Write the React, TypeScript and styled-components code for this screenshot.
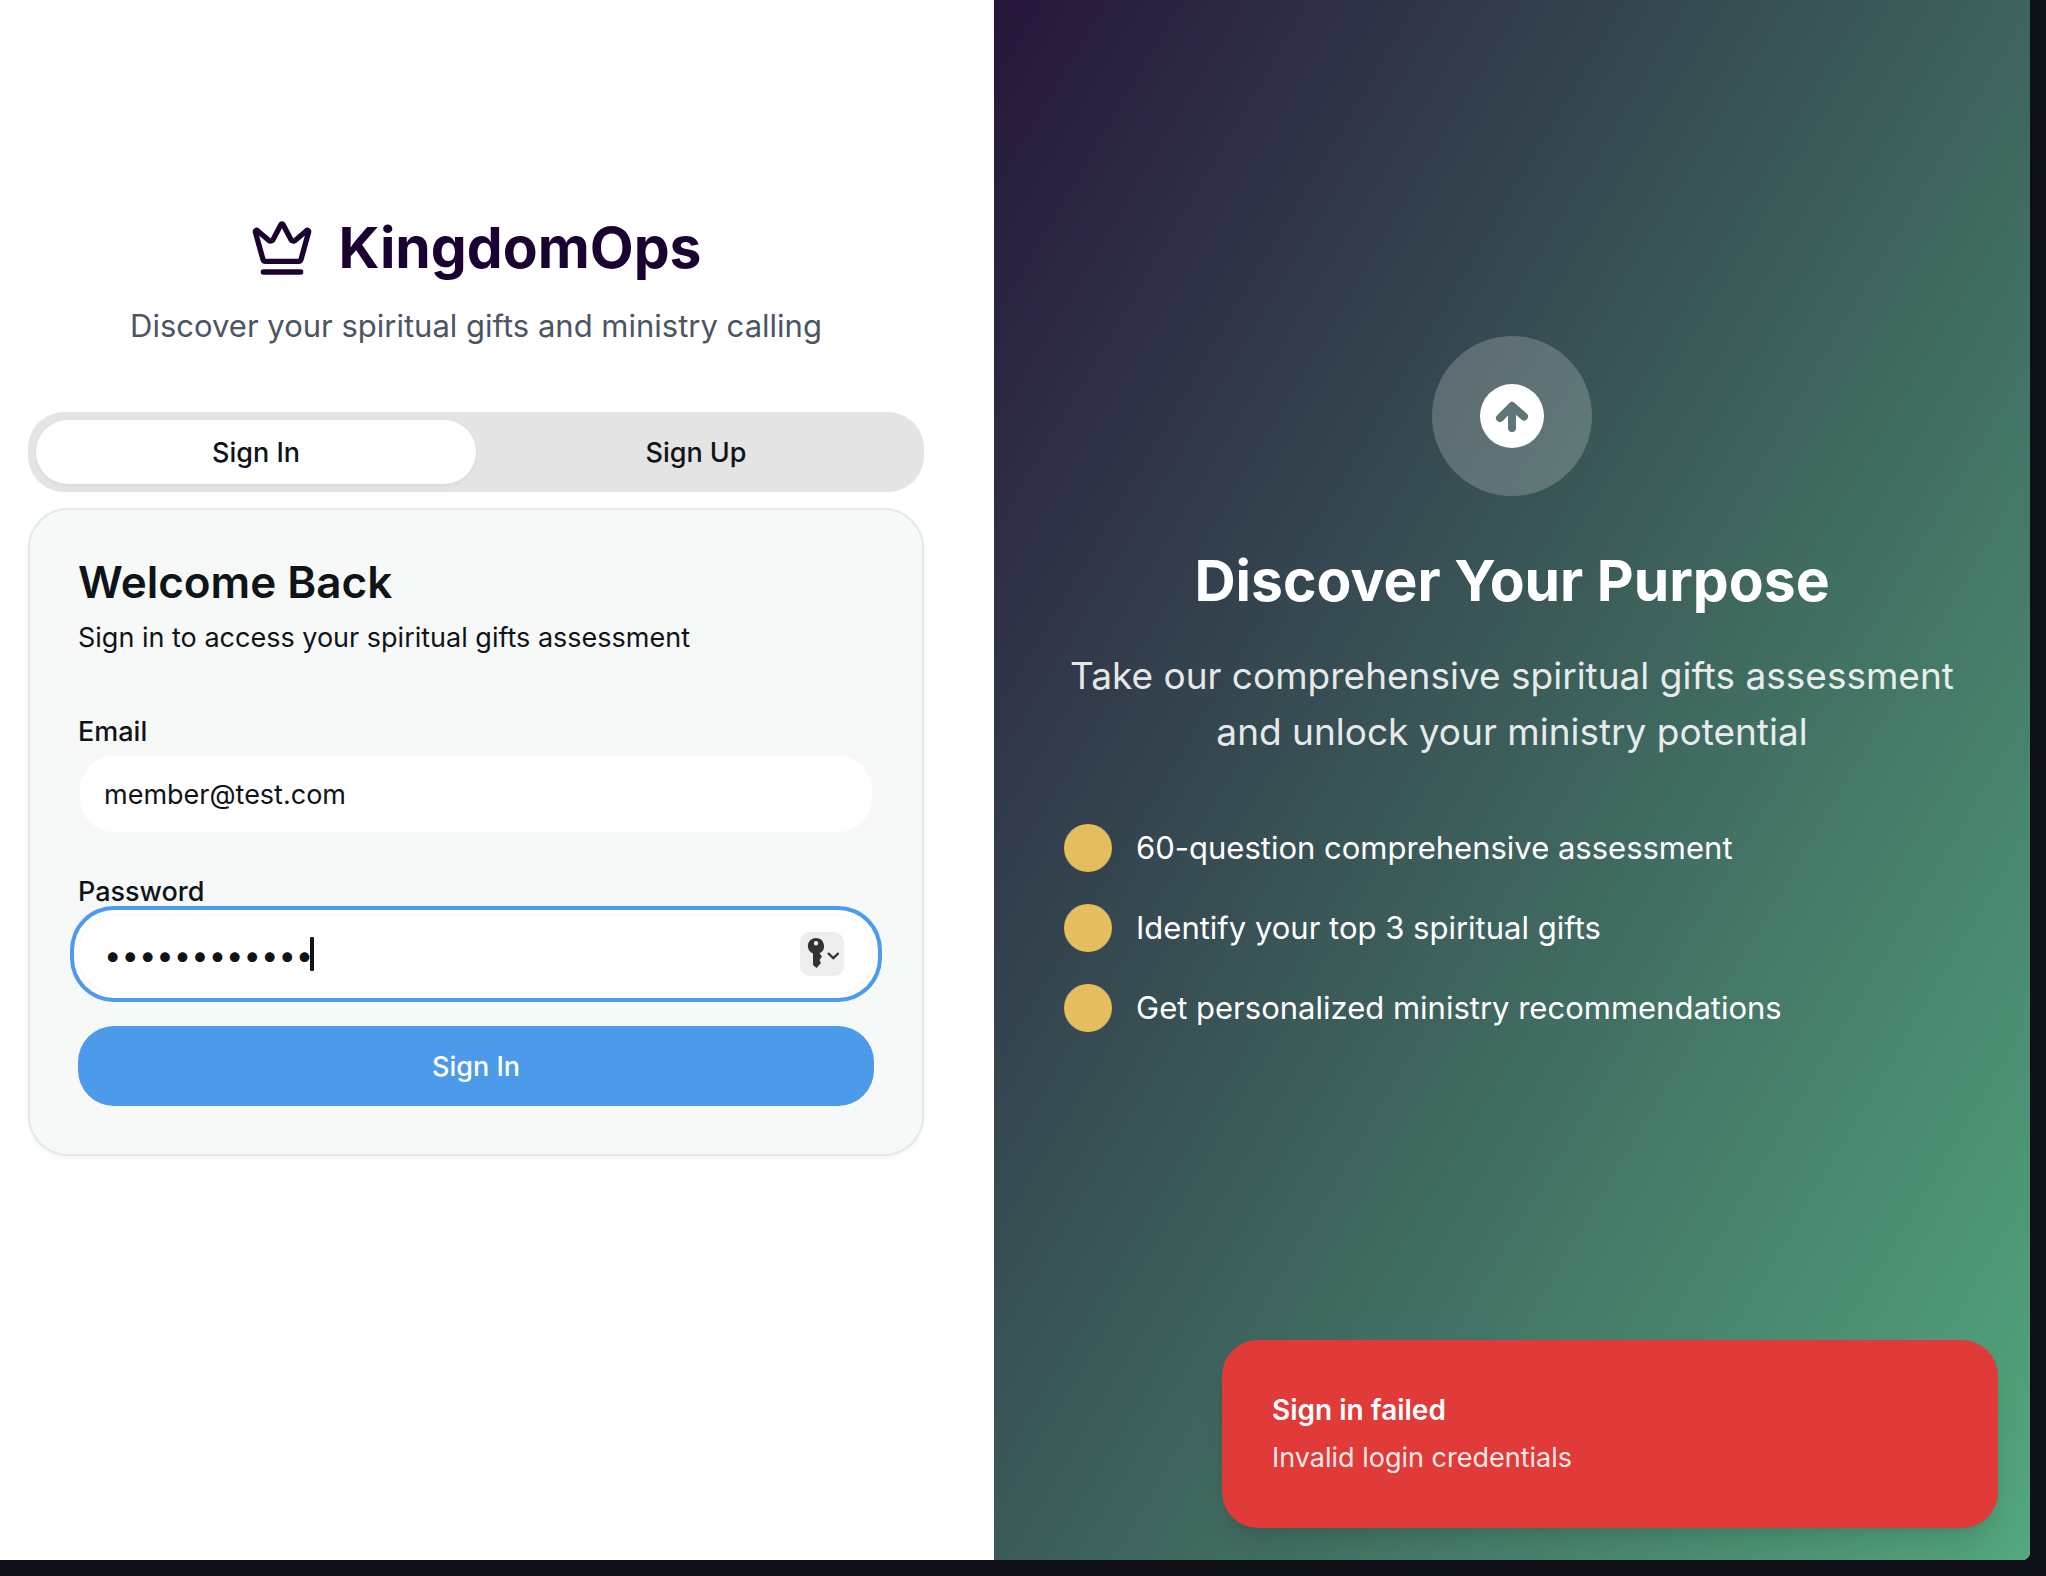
import { useState } from "react";
import styled, { createGlobalStyle } from "styled-components";

const GlobalStyle = createGlobalStyle`
  *, *::before, *::after { box-sizing: border-box; }
  html, body, #root { height: 100%; }
  body { margin: 0; background: #0f1015; }
  body, button, input { font-family: Inter, "Liberation Sans", sans-serif; }
  h1, h2, p, ul { margin: 0; padding: 0; }
`;

const Window = styled.div`
  height: 100%;
  padding: 0 16px 16px 0;
`;

const Page = styled.main`
  position: relative;
  display: grid;
  grid-template-columns: 994fr 1036fr;
  height: 100%;
  overflow: hidden;
  border-radius: 0 0 8px 0;
  background: #ffffff;
`;

const FormPanel = styled.section`
  display: flex;
  flex-direction: column;
  padding: 208px 70px 0 28px;
`;

const Brand = styled.header`
  display: flex;
  flex-direction: column;
  align-items: center;
  gap: 16px;
  margin-bottom: 64px;
`;

const BrandRow = styled.div`
  display: flex;
  align-items: center;
  gap: 24px;
  color: #1b0331;
`;

const BrandName = styled.h1`
  font-size: 57px;
  line-height: 80px;
  font-weight: 700;
`;

const Tagline = styled.p`
  font-size: 31px;
  line-height: 44px;
  color: #4b5563;
`;

const Tabs = styled.div`
  display: grid;
  grid-template-columns: 1fr 1fr;
  height: 80px;
  padding: 8px;
  margin-bottom: 16px;
  border-radius: 36px;
  background: #e4e4e4;
`;

const Tab = styled.button<{ $active: boolean }>`
  border: 0;
  border-radius: 32px;
  background: ${(p) => (p.$active ? "#ffffff" : "transparent")};
  box-shadow: ${(p) => (p.$active ? "0 2px 4px rgba(0, 0, 0, 0.05)" : "none")};
  font-size: 27px;
  font-weight: 500;
  color: #0f1419;
`;

const Card = styled.form`
  display: flex;
  flex-direction: column;
  padding: 48px;
  border: 2px solid #e1eaef;
  border-radius: 40px;
  background: #f7f9f8;
  box-shadow: 0 2px 4px rgba(0, 0, 0, 0.05);
  color: #0f1419;
`;

const CardTitle = styled.h2`
  font-size: 44px;
  line-height: 48px;
  font-weight: 600;
`;

const CardText = styled.p`
  margin: 12px 0 52px;
  font-size: 27px;
  line-height: 40px;
`;

const Fields = styled.div`
  display: grid;
  gap: 36px;
  margin-bottom: 32px;
`;

const Field = styled.div`
  display: flex;
  flex-direction: column;
`;

const Label = styled.label`
  font-size: 27px;
  line-height: 44px;
  font-weight: 500;
`;

const InputWrap = styled.div`
  position: relative;
  display: grid;
`;

const Input = styled.input<{ $ringed?: boolean }>`
  width: 100%;
  height: 80px;
  padding: 4px 24px;
  border: 2px solid ${(p) => (p.$ringed ? "#fafafa" : "#f7f9f8")};
  border-radius: 36px;
  background: #ffffff;
  box-shadow: ${(p) => (p.$ringed ? "0 0 0 4px #ffffff, 0 0 0 8px #4d9cec" : "none")};
  outline: none;
  font-size: ${(p) => (p.$ringed ? 31 : 27)}px;
  color: #0f1419;
`;

const Caret = styled.span`
  position: absolute;
  left: 232px;
  top: 23px;
  width: 4px;
  height: 34px;
  border-radius: 1px;
  background: #0f1419;
`;

const KeyButton = styled.button`
  position: absolute;
  right: 30px;
  top: 18px;
  width: 44px;
  height: 44px;
  padding: 0;
  border: 0;
  border-radius: 10px;
  background: #eeeeee;
`;

const Submit = styled.button`
  height: 80px;
  border: 0;
  border-radius: 36px;
  background: #4c9aea;
  font-size: 27px;
  font-weight: 500;
  color: #ffffff;
`;

const HeroPanel = styled.section`
  display: flex;
  flex-direction: column;
  align-items: center;
  padding: 336px 64px 0;
  background: linear-gradient(to bottom right, #240d36 0%, #3b5b59 50%, #53a77e 100%) bottom / 100% calc(100% + 192px) no-repeat;
  color: #ffffff;
`;

const HeroBadge = styled.div`
  display: grid;
  place-items: center;
  width: 160px;
  height: 160px;
  margin-bottom: 48px;
  border-radius: 50%;
  background: rgba(255, 255, 255, 0.2);
`;

const HeroTitle = styled.h2`
  font-size: 57px;
  line-height: 74px;
  font-weight: 700;
`;

const HeroText = styled.p`
  max-width: 896px;
  margin: 30px 0 64px;
  font-size: 37px;
  line-height: 56px;
  text-align: center;
  color: rgba(255, 255, 255, 0.9);
`;

const Features = styled.ul`
  display: grid;
  gap: 32px;
  width: 100%;
  max-width: 896px;
  list-style: none;
`;

const Feature = styled.li`
  display: flex;
  align-items: center;
  gap: 24px;
  font-size: 31px;
  line-height: 48px;
`;

const Dot = styled.span`
  width: 48px;
  height: 48px;
  border-radius: 50%;
  background: #e3bd5e;
`;

const Toast = styled.div`
  position: absolute;
  right: 32px;
  bottom: 32px;
  width: 776px;
  padding: 50px;
  border-radius: 36px;
  background: #e03b39;
  box-shadow: 0 20px 30px -6px rgba(0, 0, 0, 0.1), 0 8px 12px -8px rgba(0, 0, 0, 0.1);
  color: #ffffff;
`;

const ToastTitle = styled.p`
  margin-bottom: 8px;
  font-size: 28px;
  line-height: 40px;
  font-weight: 600;
`;

const ToastText = styled.p`
  font-size: 27px;
  line-height: 40px;
  color: rgba(255, 255, 255, 0.9);
`;

const CrownIcon = () => (
  <svg width="64" height="64" viewBox="0 0 24 24" fill="none" stroke="currentColor" strokeWidth="2" strokeLinecap="round" strokeLinejoin="round" aria-hidden="true">
    <path d="M11.562 3.266a.5.5 0 0 1 .876 0L15.39 8.87a1 1 0 0 0 1.516.294L21.183 5.5a.5.5 0 0 1 .798.519l-2.834 10.246a1 1 0 0 1-.956.734H5.81a1 1 0 0 1-.957-.734L2.02 6.02a.5.5 0 0 1 .798-.519l4.276 3.664a1 1 0 0 0 1.516-.294z" />
    <path d="M5 21h14" />
  </svg>
);

const ArrowIcon = () => (
  <svg width="64" height="64" viewBox="0 0 64 64" aria-hidden="true">
    <circle cx="32" cy="32" r="32" fill="#ffffff" />
    <path d="M20 34L32 22L44 32.500M32 24V44" fill="none" stroke="#5f7578" strokeWidth="8" strokeLinecap="round" strokeLinejoin="round" />
  </svg>
);

const KeyIcon = () => (
  <svg width="44" height="44" viewBox="0 0 44 44" aria-hidden="true">
    <path fillRule="evenodd" fill="#333333" d="M16 6a8 8 0 0 1 3.500 15.200L22 24.500l-2.500 3.500 1.500 3-4.500 5-3.500-3V21.500A8 8 0 0 1 16 6Zm0 3a2.200 2.200 0 1 0 0 4.400 2.200 2.200 0 0 0 0-4.400Z" />
    <path d="M28 21L33.300 26L38.600 21" fill="none" stroke="#333333" strokeWidth="2.400" />
  </svg>
);

const features = [
  "60-question comprehensive assessment",
  "Identify your top 3 spiritual gifts",
  "Get personalized ministry recommendations",
];

export default function App() {
  const [tab, setTab] = useState("in");
  return (
    <Window>
      <GlobalStyle />
      <Page>
        <FormPanel>
          <Brand>
            <BrandRow>
              <CrownIcon />
              <BrandName>KingdomOps</BrandName>
            </BrandRow>
            <Tagline>Discover your spiritual gifts and ministry calling</Tagline>
          </Brand>
          <Tabs role="tablist">
            <Tab role="tab" type="button" aria-selected={tab === "in"} $active={tab === "in"} onClick={() => setTab("in")}>
              Sign In
            </Tab>
            <Tab role="tab" type="button" aria-selected={tab === "up"} $active={tab === "up"} onClick={() => setTab("up")}>
              Sign Up
            </Tab>
          </Tabs>
          <Card onSubmit={(e) => e.preventDefault()}>
            <CardTitle>Welcome Back</CardTitle>
            <CardText>Sign in to access your spiritual gifts assessment</CardText>
            <Fields>
              <Field>
                <Label htmlFor="email">Email</Label>
                <Input id="email" type="email" defaultValue="member@test.com" />
              </Field>
              <Field>
                <Label htmlFor="password">Password</Label>
                <InputWrap>
                  <Input id="password" type="password" defaultValue="passwordpass" $ringed />
                  <Caret />
                  <KeyButton type="button" aria-label="Saved passwords">
                    <KeyIcon />
                  </KeyButton>
                </InputWrap>
              </Field>
            </Fields>
            <Submit type="submit">Sign In</Submit>
          </Card>
        </FormPanel>
        <HeroPanel>
          <HeroBadge>
            <ArrowIcon />
          </HeroBadge>
          <HeroTitle>Discover Your Purpose</HeroTitle>
          <HeroText>Take our comprehensive spiritual gifts assessment and unlock your ministry potential</HeroText>
          <Features>
            {features.map((text) => (
              <Feature key={text}>
                <Dot />
                {text}
              </Feature>
            ))}
          </Features>
        </HeroPanel>
        <Toast role="alert">
          <ToastTitle>Sign in failed</ToastTitle>
          <ToastText>Invalid login credentials</ToastText>
        </Toast>
      </Page>
    </Window>
  );
}
